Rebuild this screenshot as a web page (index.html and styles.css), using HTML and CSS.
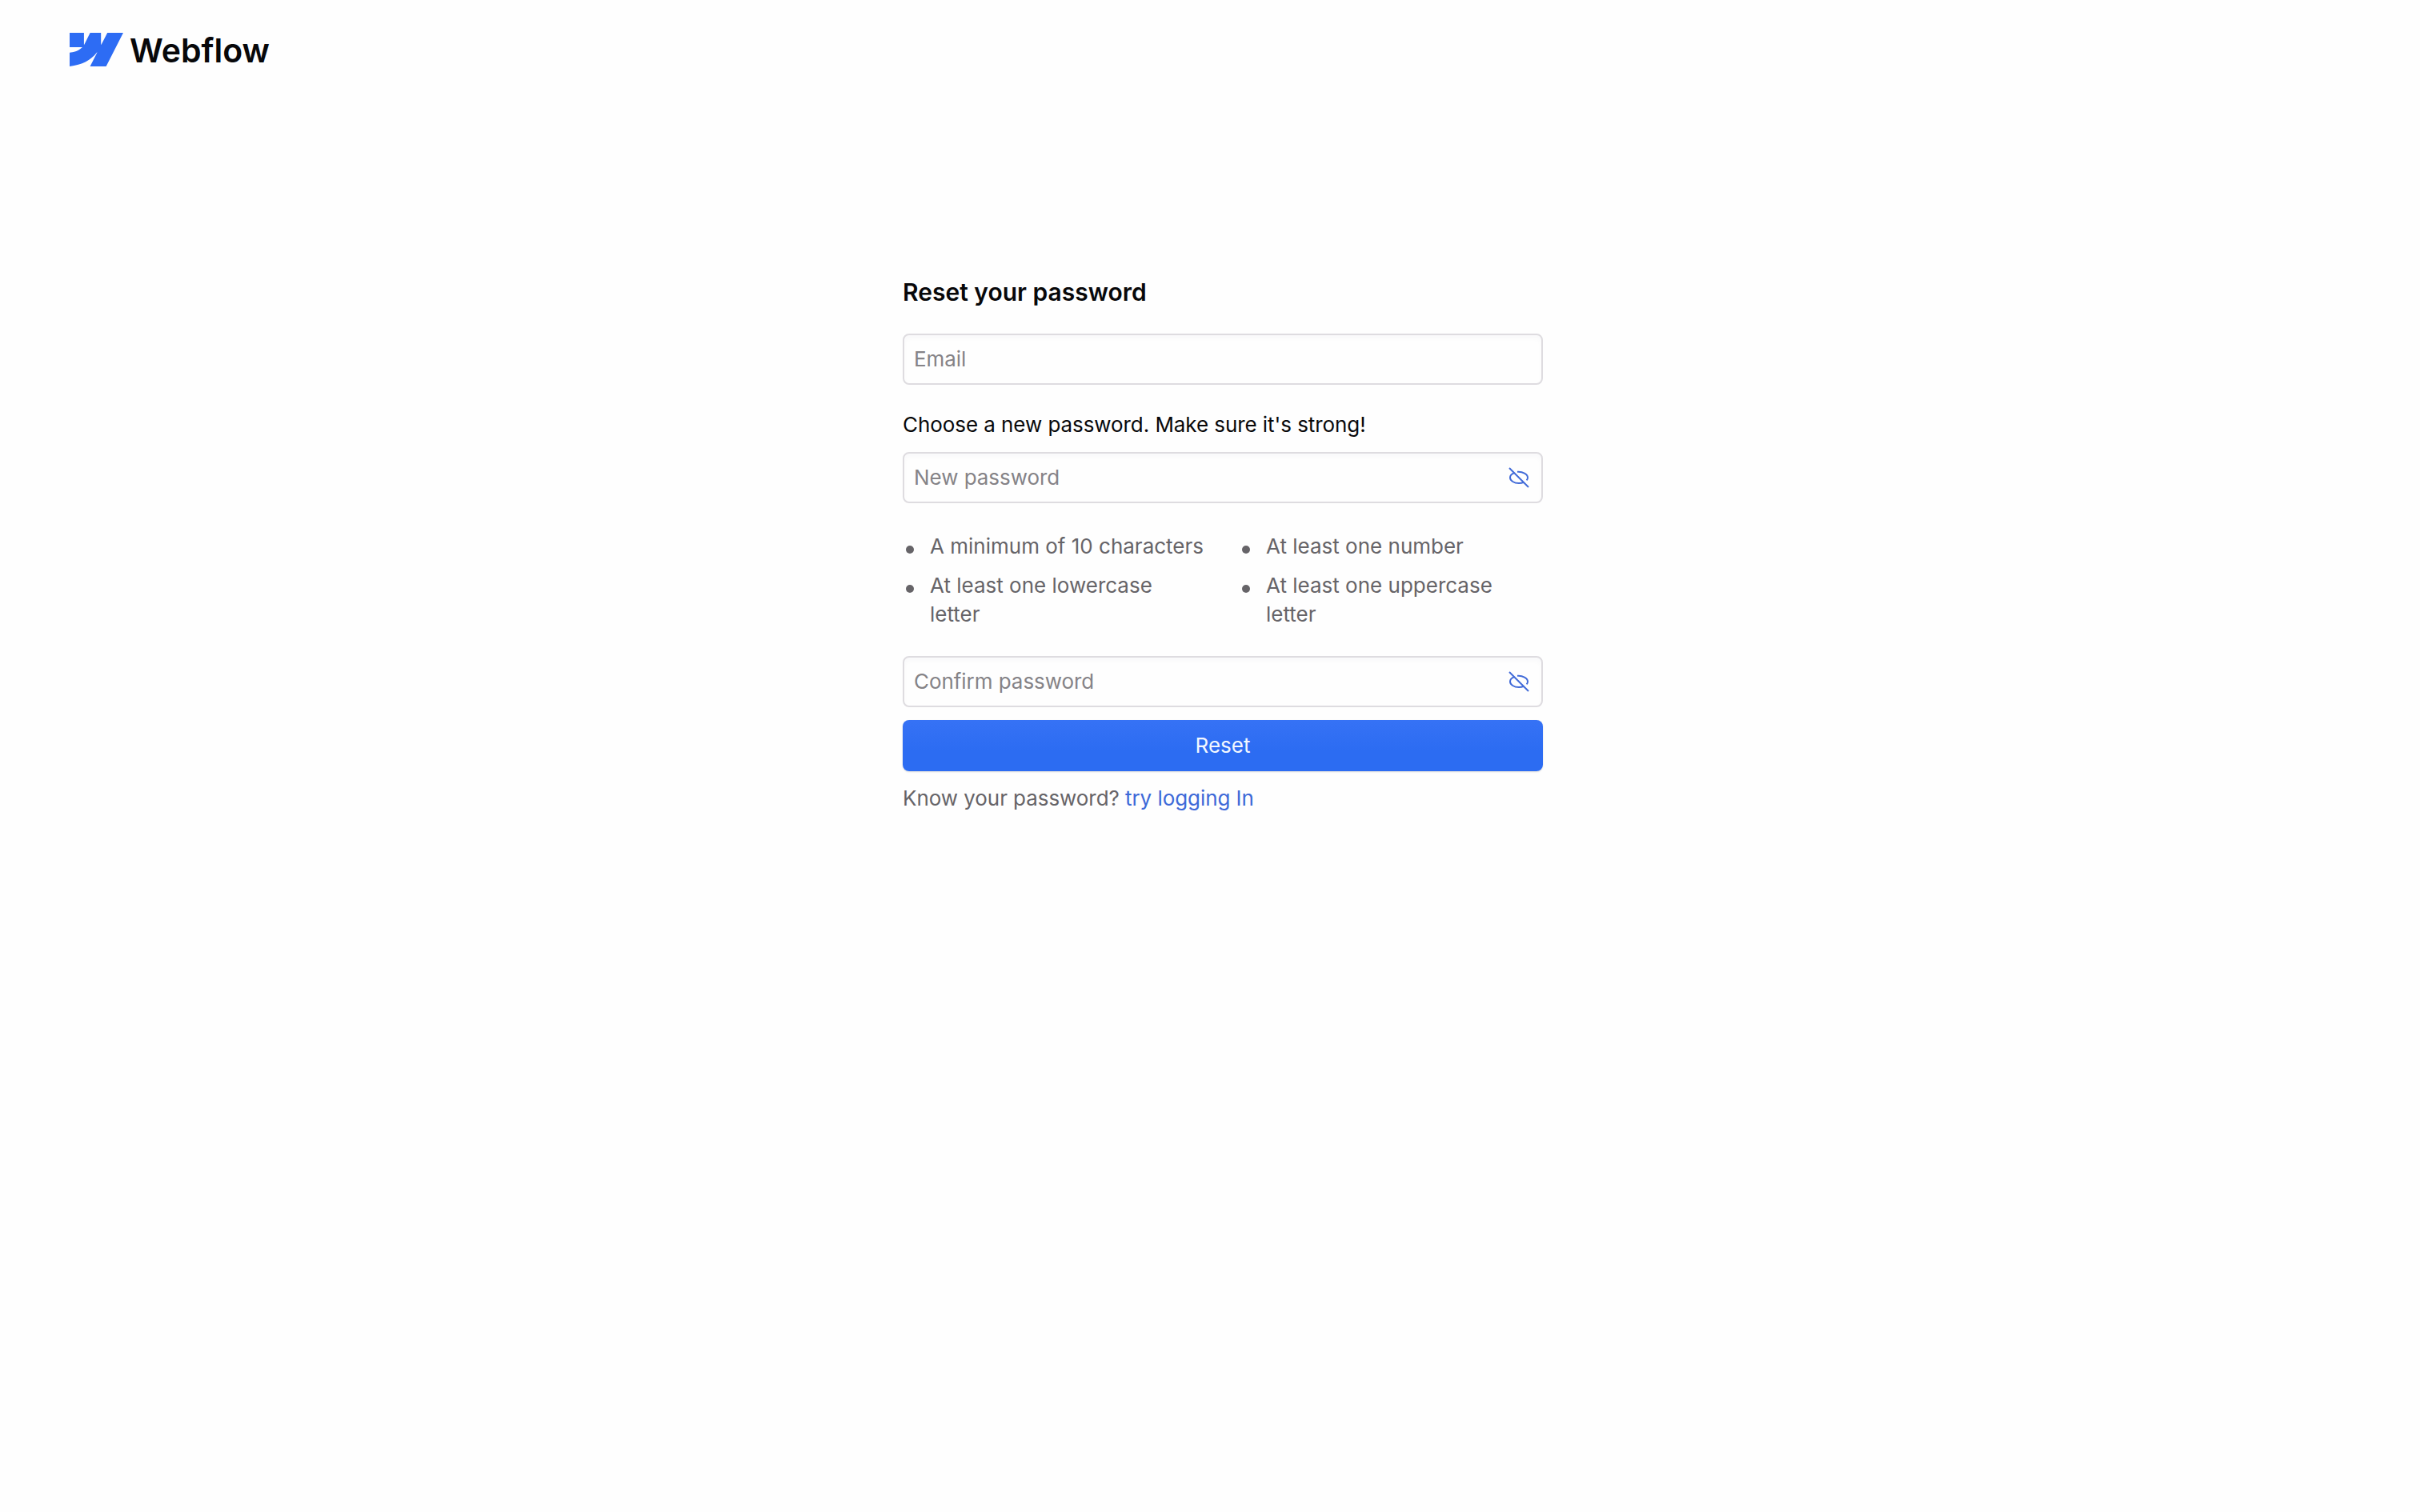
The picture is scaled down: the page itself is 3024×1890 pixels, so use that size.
FILE: index.html
```
<!DOCTYPE html>
<html lang="en">
<head>
    <meta charset="UTF-8">
    <meta name="viewport" content="width=device-width, initial-scale=1.0">
    <title>Reset your password</title>
    <link rel="stylesheet" href="styles.css">
</head>
<body>

    <header class="header">
        <svg class="logo-mark" viewBox="0 4.515 24 14.97">
            <path d="m24 4.515-7.658 14.97H9.149l3.205-6.204h-.144C9.566 16.713 5.621 18.973 0 19.485v-6.118s3.596-.213 5.71-2.435H0V4.515h6.417v5.278l.144-.001 2.622-5.277h4.854v5.244h.144l2.72-5.244H24Z"/>
        </svg>
        <span class="logo-text">Webflow</span>
    </header>

    <form class="reset-form">
        <h1 class="title">Reset your password</h1>

        <div class="field">
            <input type="email" id="email" placeholder="Email">
        </div>

        <p class="hint">Choose a new password. Make sure it's strong!</p>
        <div class="field">
            <input type="password" id="newPassword" placeholder="New password">
            <svg class="eye" viewBox="0 0 28 28" onclick="togglePassword('newPassword')">
                <path d="M2 2 26 26M12 6.8C18.5 6.2 25 9.6 25 14c0 1.2-.5 2.4-1.4 3.4M7.6 8.4C4.7 9.7 3 11.8 3 14c0 3.9 4.9 7.1 11 7.1 2.2 0 4.3-.4 6-1.2"/>
            </svg>
        </div>

        <ul class="rules">
            <li>A minimum of 10 characters</li>
            <li>At least one number</li>
            <li>At least one lowercase letter</li>
            <li>At least one uppercase letter</li>
        </ul>

        <div class="field">
            <input type="password" id="confirmPassword" placeholder="Confirm password">
            <svg class="eye" viewBox="0 0 28 28" onclick="togglePassword('confirmPassword')">
                <path d="M2 2 26 26M12 6.8C18.5 6.2 25 9.6 25 14c0 1.2-.5 2.4-1.4 3.4M7.6 8.4C4.7 9.7 3 11.8 3 14c0 3.9 4.9 7.1 11 7.1 2.2 0 4.3-.4 6-1.2"/>
            </svg>
        </div>

        <button type="button" class="reset-button">Reset</button>
        <p class="login">Know your password? <a href="#">try logging In</a></p>
    </form>

    <script>
        function togglePassword(id) {
            var input = document.getElementById(id);
            input.type = input.type === "password" ? "text" : "password";
        }
    </script>
</body>
</html>
```
FILE: styles.css
```
* {
    box-sizing: border-box;
}

body {
    margin: 0;
    font-family: Inter, "Liberation Sans", sans-serif;
    font-size: 26px;
    line-height: 36px;
    color: #08080a;
    background-color: #fefefe;
}

.header {
    display: flex;
    height: 124px;
    padding: 41px 87px;
}

.logo-mark {
    width: 67px;
    height: 42px;
    fill: #2d6cf4;
}

.logo-text {
    margin: 1px 0 0 8px;
    font-size: 41px;
    font-weight: 600;
    line-height: 42px;
}

.reset-form {
    width: 800px;
    margin: 223px 0 0 1128px;
}

.title {
    margin: 0 0 34px;
    font-size: 30px;
    font-weight: 600;
    line-height: 36px;
}

.field {
    display: flex;
    align-items: center;
    height: 64px;
    padding: 0 14px 0 12px;
    border: 2px solid #dedce0;
    border-radius: 8px;
    background-color: #fefefe;
    box-shadow: inset 0 4px 6px rgba(60, 40, 80, 0.025);
}

.field input {
    flex: 1;
    height: 36px;
    padding: 0;
    border: none;
    outline: none;
    background: none;
    font: inherit;
    letter-spacing: -0.05px;
    color: #08080a;
}

.field input::placeholder {
    color: #858387;
}

.eye {
    width: 28px;
    height: 28px;
    fill: none;
    stroke: #426bd8;
    stroke-width: 2;
    cursor: pointer;
}

.hint {
    margin: 32px 0 16px;
    letter-spacing: -0.07px;
}

.rules {
    display: grid;
    grid-template-columns: 1fr 1fr;
    gap: 13px 40px;
    margin: 36px 0 34px;
    padding: 0;
    list-style: none;
    color: #666468;
}

.rules li {
    display: flex;
    gap: 20px;
    padding-left: 4px;
}

.rules li::before {
    content: "";
    flex: none;
    width: 10px;
    height: 10px;
    margin-top: 17px;
    border-radius: 50%;
    background-color: #666468;
}

.reset-button {
    display: block;
    width: 100%;
    height: 64px;
    margin: 16px 0;
    padding: 0;
    border: none;
    border-radius: 8px;
    background: linear-gradient(#3672f5, #2c6cf2 60%);
    box-shadow: 0 1px 2px rgba(0, 0, 0, 0.15);
    font: inherit;
    color: #f2f7ff;
    cursor: pointer;
}

.login {
    margin: 0;
    letter-spacing: -0.06px;
    color: #666468;
}

.login a {
    color: #3d69d8;
    text-decoration: none;
}
```
